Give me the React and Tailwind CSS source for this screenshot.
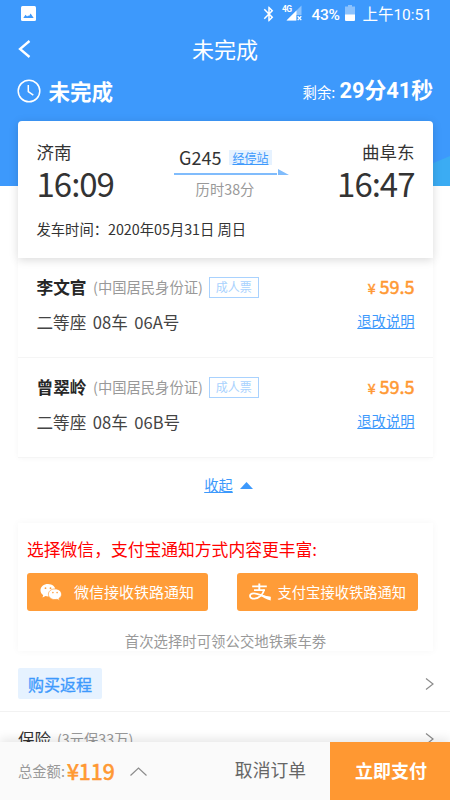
import { MdBluetooth } from "react-icons/md";

const passengers = [
  { name: "李文官", idType: "(中国居民身份证)", ticket: "成人票", seat: ["二等座", "08车", "06A号"], price: "59.5" },
  { name: "曾翠岭", idType: "(中国居民身份证)", ticket: "成人票", seat: ["二等座", "08车", "06B号"], price: "59.5" },
];

function PictureIcon() {
  return (
    <svg className="w-[15px] h-[15px]" viewBox="0 0 15 15">
      <rect width="15" height="15" rx="1.5" fill="#fff" />
      <path d="M2.300 12l2.200-3.200 1.600 1.700 1-1 1 .6 1.500-2.600L12.700 12z" fill="#3d99fc" />
    </svg>
  );
}

function SignalIcon() {
  return (
    <svg className="w-5 h-4" viewBox="0 0 20 16">
      <path d="M19.500 0.500V15.500H4.500z" fill="#8bc2fd" />
      <path d="M14.500 5.500V15.500H4.500z" fill="#fff" />
      <path d="M14.500 10H20V16H14.500z" fill="#3d99fc" />
      <path d="M15.700 11.200l3.600 3.900M19.300 11.200l-3.600 3.900" stroke="#fff" strokeWidth="1.300" />
      <text x="0" y="7" fontSize="8.500" fontWeight="700" fontFamily="Roboto, sans-serif" fill="#fff" textLength="10">4G</text>
    </svg>
  );
}

function BatteryIcon() {
  return (
    <svg className="w-[10px] h-4" viewBox="0 0 10 16">
      <path d="M3 0h4v1.500h3V10H0V1.500h3z" fill="#8bc2fd" />
      <path d="M0 9.500h10V15a1 1 0 0 1-1 1H1a1 1 0 0 1-1-1z" fill="#fff" />
    </svg>
  );
}

function WechatIcon() {
  return (
    <svg className="w-[22px] h-[18px]" viewBox="0 0 22 18">
      <path d="M8 1C3.700 1 .5 3.700.5 7.200c0 2 1 3.700 2.700 4.900L2.500 14.600l3-1.500c.8.2 1.600.3 2.500.3 4.300 0 7.500-2.800 7.500-6.200S12.300 1 8 1z" fill="#fff" />
      <circle cx="5.500" cy="5.200" r="0.900" fill="#ff9c38" />
      <circle cx="10.500" cy="5.200" r="0.900" fill="#ff9c38" />
      <path d="M15 5.900c-3.800 0-6.600 2.400-6.600 5.300 0 3 2.800 5.400 6.600 5.400.7 0 1.400-.1 2.100-.3l2.400 1.300-.6-2.100c1.600-1 2.600-2.500 2.600-4.300 0-2.900-2.700-5.300-6.500-5.300z" fill="#fff" stroke="#ff9c38" strokeWidth="0.700" />
      <circle cx="12.900" cy="9.600" r="0.800" fill="#ff9c38" />
      <circle cx="17.100" cy="9.600" r="0.800" fill="#ff9c38" />
    </svg>
  );
}

function AlipayIcon() {
  return (
    <svg className="w-[22px] h-[18px]" viewBox="0 0 22 18" fill="none" stroke="#fff">
      <path d="M3.200 3.400h14.600M5 7.100h10.800M10.300 0.400v6.700" strokeWidth="1.900" />
      <path d="M15.300 6.600C14 11.400 10.200 15.700 5.300 15.700 2.500 15.700 1 14.600 1 13c0-1.700 1.500-2.700 3.800-2.700 4.200 0 8.400 3 16.500 4.700" strokeWidth="1.800" />
      <path d="M11.500 11.300c3.200 1.300 6.200 2.200 10.200 2.500v3.600c-4.500-1.200-7.800-3.200-10.700-5.200z" fill="#fff" stroke="none" />
    </svg>
  );
}

function ChevronRight() {
  return (
    <svg className="w-[9px] h-3" viewBox="0 0 9 12" fill="none" stroke="#8c8c8c" strokeWidth="1.200">
      <path d="M1 0.500l7 5.500-7 5.500" />
    </svg>
  );
}

function StatusBar() {
  return (
    <div className="flex h-7 items-center justify-between pl-[21px] pr-[18px] text-white">
      <div className="pb-[2px]"><PictureIcon /></div>
      <div className="flex items-center">
        <MdBluetooth className="h-[18px] w-[18px]" />
        <div className="ml-[4px] pb-[2px]"><SignalIcon /></div>
        <span className="ml-[9px] w-[30px] whitespace-nowrap pt-px font-['Roboto','Noto_Sans_CJK_SC',sans-serif] text-[15.500px] leading-7 font-medium tracking-[-0.300px]">43%</span>
        <div className="ml-[4px] pb-[2px]"><BatteryIcon /></div>
        <span className="ml-[7px] pt-[3px] font-['Roboto','Noto_Sans_CJK_SC',sans-serif] text-[15.500px]">上午10:51</span>
      </div>
    </div>
  );
}

function Header() {
  return (
    <header className="relative h-[186px] shrink-0 overflow-hidden bg-[#3d99fc] text-white">
      <svg className="absolute right-0 bottom-0 h-[34px] w-[40px]" viewBox="0 0 40 34">
        <path d="M0 34V22Q20 12 40 4V34z" fill="#3bacf3" />
      </svg>
      <StatusBar />
      <div className="grid h-[42px] grid-cols-[1fr_auto_1fr] items-center px-[18px]">
        <svg className="h-[18px] w-[13px]" viewBox="0 0 13 18" fill="none" stroke="#fff" strokeWidth="2.300">
          <path d="M11.500 1L2 9l9.500 8" />
        </svg>
        <h1 className="pb-[2px] text-[22px] leading-[40px]">未完成</h1>
      </div>
      <div className="flex h-[42px] items-center justify-between px-[17px]">
        <div className="flex items-center gap-[7.500px]">
          <svg className="h-6 w-6" viewBox="0 0 24 24" fill="none" stroke="#fff" strokeWidth="1.500">
            <circle cx="12" cy="12" r="10.800" />
            <path d="M11.300 6v6.700l5 3.500" />
          </svg>
          <span className="text-[21.500px] font-bold">未完成</span>
        </div>
        <div className="flex items-baseline">
          <span className="text-[14.400px]">剩余:</span>
          <span className="ml-[4px] font-['Roboto','Noto_Sans_CJK_SC',sans-serif] text-[21.800px] font-bold">29分41秒</span>
        </div>
      </div>
    </header>
  );
}

function TripCard() {
  return (
    <section className="relative ml-[18px] mr-[17px] mt-[-65px] h-[137px] shrink-0 rounded-t-[4px] bg-white px-[18.500px] pt-[19px] text-[#333] shadow-[0_2px_10px_rgba(0,0,0,0.15)]">
      <div className="flex justify-between">
        <div className="w-[80px]">
          <div className="text-[17.500px] leading-6">济南</div>
          <div className="text-[33px] leading-[38px] tracking-[-1px]">16:09</div>
        </div>
        <div className="w-[115px] pt-[5px]">
          <div className="flex items-center pl-[5px]">
            <span className="w-[50px] text-[18px] leading-6">G245</span>
            <span className="h-[15px] w-[43px] bg-[#e6f2ff] text-center text-[12px] leading-[15px] text-[#3d99fc] underline">经停站</span>
          </div>
          <svg className="h-[7px] w-[115px]" viewBox="0 0 115 7" fill="#80bcfc">
            <path d="M0 4h103v2H0zM104 0l11 6h-11z" />
          </svg>
          <div className="pt-[3px] pr-[13px] text-center text-[14.300px] leading-5 text-[#999]">历时38分</div>
        </div>
        <div className="w-[68px]">
          <div className="flex justify-end whitespace-nowrap text-[17.500px] leading-6">曲阜东</div>
          <div className="flex justify-end whitespace-nowrap text-[33px] leading-[38px] tracking-[-1px]">16:47</div>
        </div>
      </div>
      <div className="mt-[16.500px] text-[14.300px] leading-5">发车时间：2020年05月31日 周日</div>
    </section>
  );
}

function Passenger({ name, idType, ticket, seat, price }) {
  return (
    <div className="h-[100px] border-b border-[#f5f5f5] px-[18.500px] pt-[17px]">
      <div className="flex h-6 items-center">
        <span className="pt-[2px] text-[16.700px] font-bold text-[#262626]">{name}</span>
        <span className="ml-[6.500px] text-[14.300px] text-[#999]">{idType}</span>
        <span className="ml-[6px] flex h-[21px] w-[50px] items-center justify-center border border-[#a9d2fe] text-[12px] text-[#a9d2fe]">{ticket}</span>
        <span className="ml-auto pb-px text-[18px] text-[#ff9832] [-webkit-text-stroke:0.500px_#ff9832]">
          <span className="mr-[4px] text-[14px]">¥</span>{price}
        </span>
      </div>
      <div className="mt-[11px] flex h-6 items-center text-[16.600px] text-[#444]">
        <span className="flex gap-[6.500px]">
          {seat.map((s) => <span key={s}>{s}</span>)}
        </span>
        <a className="ml-auto pb-[2px] text-[14.300px] text-[#3d99fc] underline">退改说明</a>
      </div>
    </div>
  );
}

function NoticePanel() {
  return (
    <section className="ml-[18px] mr-[17px] mt-[26px] h-[128px] shrink-0 bg-white px-[9px] pt-[14px] shadow-[0_0_8px_rgba(0,0,0,0.04)]">
      <div className="text-[16.800px] leading-6 text-[#f00]">选择微信，支付宝通知方式内容更丰富:</div>
      <div className="mt-[12px] flex justify-between pr-[6px] text-white">
        <button className="flex h-[38px] w-[181px] items-center rounded-[3px] bg-[#ff9c38] pl-[13px]">
          <WechatIcon />
          <span className="ml-[12px] text-[15px]">微信接收铁路通知</span>
        </button>
        <button className="flex h-[38px] w-[181px] items-center rounded-[3px] bg-[#ff9c38] pl-[12px]">
          <AlipayIcon />
          <span className="ml-[6.500px] text-[14.300px]">支付宝接收铁路通知</span>
        </button>
      </div>
      <div className="mt-[20px] text-center text-[14.400px] leading-5 text-[#999]">首次选择时可领公交地铁乘车劵</div>
    </section>
  );
}

function Footer() {
  return (
    <footer className="relative flex h-[58px] shrink-0 items-center bg-[#fafafa] pl-[18px] shadow-[0_-3px_10px_rgba(0,0,0,0.1)]">
      <span className="text-[14.300px] text-[#999]">总金额:</span>
      <span className="ml-[2px] text-[21.500px] text-[#ff9832] [-webkit-text-stroke:0.700px_#ff9832]">¥119</span>
      <svg className="ml-[15px] h-[9px] w-[17px]" viewBox="0 0 17 9" fill="none" stroke="#8c8c8c" strokeWidth="1.200">
        <path d="M0.500 8.500l8-7.500 8 7.500" />
      </svg>
      <span className="ml-auto mr-[24px] pb-[3px] text-[17.800px] text-[#666]">取消订单</span>
      <button className="h-full w-[120px] bg-[#ff9832] pb-[2px] pl-[2px] text-[18px] font-bold text-white">立即支付</button>
    </footer>
  );
}

export default function App() {
  return (
    <div className="flex h-[800px] w-[450px] flex-col overflow-hidden bg-white font-['Noto_Sans_CJK_SC',sans-serif]">
      <main className="flex min-h-0 flex-1 flex-col overflow-hidden">
        <Header />
        <TripCard />
        <section className="ml-[18px] mr-[17px] shrink-0 shadow-[0_0_6px_rgba(0,0,0,0.04)]">
          {passengers.map((p) => <Passenger key={p.name} {...p} />)}
        </section>
        <div className="mt-[15px] flex h-6 shrink-0 items-center justify-center gap-[7px] pl-[7px] text-[14.300px] text-[#3d99fc]">
          <span className="underline">收起</span>
          <svg className="h-[7px] w-[13px]" viewBox="0 0 13 7" fill="#3d99fc">
            <path d="M6.500 0L13 7H0z" />
          </svg>
        </div>
        <NoticePanel />
        <div className="flex h-[61px] shrink-0 items-center justify-between border-b border-[#f2f2f2] pl-[18px] pr-[16px] pt-[5px]">
          <span className="flex h-[31px] w-[84px] items-center justify-center rounded-[2px] bg-[#e6f2ff] text-[16px] text-[#3d99fc] [-webkit-text-stroke:0.300px_#3d99fc]">购买返程</span>
          <ChevronRight />
        </div>
        <div className="flex h-[54px] shrink-0 items-center pl-[18px] pr-[16px]">
          <span className="text-[16.500px] text-[#333]">保险</span>
          <span className="ml-[6px] text-[14.300px] text-[#999]">(3元保33万)</span>
          <div className="ml-auto"><ChevronRight /></div>
        </div>
      </main>
      <Footer />
    </div>
  );
}
